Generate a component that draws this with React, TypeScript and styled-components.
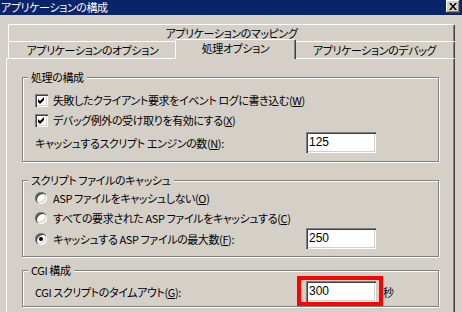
import React from "react";
import styled, { createGlobalStyle } from "styled-components";

const Global = createGlobalStyle`
  html, body { margin: 0; padding: 0; background: #D4D0C8; overflow: hidden; }
  body {
    font-family: "Noto Sans CJK JP", "Noto Sans", sans-serif;
    font-size: 11px;
    color: #000;
  }
  * { box-sizing: border-box; }
`;

const Window = styled.div`
  width: 462px;
  height: 312px;
  overflow: hidden;
  background: #d4d0c8;
  display: flex;
  flex-direction: column;
  font-size: 11px;
  letter-spacing: -0.4px;
  font-feature-settings: "palt";
`;

const TitleBar = styled.div`
  height: 15px;
  flex: none;
  background: #0a246a;
  color: #fff;
  display: flex;
  align-items: center;
  justify-content: space-between;
  padding: 0 2px 0 1px;
`;

const Title = styled.span`
  line-height: 15px;
  white-space: nowrap;
`;

const CloseButton = styled.div`
  width: 14px;
  height: 13px;
  align-self: flex-start;
  background: #d4d0c8;
  box-shadow: inset -1px -1px #404040, inset 1px 1px #fff, inset -2px -2px #808080;
  display: flex;
  align-items: center;
  justify-content: center;
`;

const Body = styled.div`
  flex: 1;
  min-height: 0;
  padding: 9px 0 0 6px;
  display: flex;
  flex-direction: column;
`;

const TabStrip = styled.div`
  margin-left: 2px;
  width: 447px;
  display: flex;
  flex-direction: column;
  position: relative;
  z-index: 1;
`;

const TabRow = styled.div`
  display: flex;
  align-items: flex-end;
  height: 17px;
`;

const Tab = styled.div<{ $w: number; $active?: boolean }>`
  width: ${(p) => p.$w}px;
  height: ${(p) => (p.$active ? 20 : 17)}px;
  margin: ${(p) => (p.$active ? "0 -2px -1px" : "0")};
  position: relative;
  z-index: ${(p) => (p.$active ? 2 : 1)};
  background: #d4d0c8;
  border-top: 1px solid #fff;
  border-left: 1px solid #fff;
  border-right: 1px solid #404040;
  border-top-left-radius: 2px;
  border-top-right-radius: 2px;
  box-shadow: inset -1px 0 #808080;
  display: flex;
  align-items: center;
  justify-content: center;
  padding-bottom: ${(p) => (p.$active ? 3 : 0)}px;
  white-space: nowrap;
  line-height: 14px;
`;

const Panel = styled.div`
  width: 449px;
  flex: 1;
  border-top: 1px solid #fff;
  border-left: 1px solid #fff;
  border-right: 1px solid #404040;
  box-shadow: inset -1px 0 #808080;
  padding: 11px 0 0 15px;
  display: flex;
  flex-direction: column;
`;

const Group = styled.fieldset<{ $mt: number; $pt: number; $pb: number }>`
  margin: ${(p) => p.$mt}px 0 0 0;
  padding: ${(p) => p.$pt}px 0 ${(p) => p.$pb}px 12px;
  width: 417px;
  min-width: 0;
  flex: none;
  border: 1px solid #808080;
  box-shadow: inset 1px 1px #fff, 1px 1px #fff;
  display: flex;
  flex-direction: column;
`;

const Legend = styled.legend`
  padding: 0 3px;
  margin-left: -7px;
  height: 14px;
  line-height: 14px;
  background: #d4d0c8;
  white-space: nowrap;
`;

const OptionRow = styled.div<{ $h?: number }>`
  height: ${(p) => p.$h ?? 20}px;
  display: flex;
  align-items: center;
  gap: 5px;
  white-space: nowrap;
  line-height: 14px;
`;

const CheckBox = styled.span`
  width: 13px;
  height: 13px;
  flex: none;
  background: #fff;
  box-shadow: inset 1px 1px #808080, inset 2px 2px #404040, inset -1px -1px #fff,
    inset -2px -2px #d4d0c8;
  display: flex;
  align-items: center;
  justify-content: center;
`;

const Radio = styled.span<{ $on?: boolean }>`
  width: 12px;
  height: 12px;
  flex: none;
  margin-right: 1px;
  border-radius: 50%;
  background: #fff;
  box-shadow: inset 1px 1px #808080, inset 2px 2px #404040, inset -1px -1px #fff,
    inset -2px -2px #d4d0c8;
  display: flex;
  align-items: center;
  justify-content: center;
  &::after {
    content: "";
    display: ${(p) => (p.$on ? "block" : "none")};
    width: 4px;
    height: 4px;
    border-radius: 50%;
    background: #000;
  }
`;

const FieldRow = styled.div<{ $mt?: number }>`
  margin-top: ${(p) => p.$mt ?? 0}px;
  height: 21px;
  display: grid;
  grid-template-columns: 271px 70px auto;
  align-items: center;
  white-space: nowrap;
  line-height: 14px;
`;

const RadioLabel = styled.span`
  display: flex;
  align-items: center;
  gap: 5px;
`;

const FieldWrap = styled.span`
  position: relative;
  width: 70px;
  height: 21px;
  display: block;
`;

const TextBox = styled.input`
  width: 70px;
  height: 21px;
  margin: 0;
  border: none;
  outline: none;
  background: #fff;
  box-shadow: inset 1px 1px #808080, inset 2px 2px #404040, inset -1px -1px #fff,
    inset -2px -2px #d4d0c8;
  padding: 0 2px 2px 3px;
  font-family: "Liberation Sans", Arial, sans-serif;
  font-size: 12px;
  letter-spacing: 0;
  color: #000;
  display: block;
`;

const Highlight = styled.span`
  position: absolute;
  left: -9px;
  top: -5px;
  width: 86px;
  height: 30px;
  border: 4px solid #ff0000;
  pointer-events: none;
`;

const Unit = styled.span`
  margin-left: 7px;
`;

const Check = () => (
  <svg width="7" height="7" viewBox="0 0 7 7">
    <path d="M0 2 L2 4 L6 0 L6 3 L2 7 L0 5 Z" fill="#000" />
  </svg>
);

const CloseGlyph = () => (
  <svg width="8" height="7" viewBox="0 0 8 7">
    <path d="M0 0 H2 L4 2.5 L6 0 H8 L5 3.5 L8 7 H6 L4 4.5 L2 7 H0 L3 3.5 Z" fill="#000" />
  </svg>
);

export default function App() {
  return (
    <>
      <Global />
      <Window>
        <TitleBar>
          <Title>アプリケーションの構成</Title>
          <CloseButton>
            <CloseGlyph />
          </CloseButton>
        </TitleBar>
        <Body>
          <TabStrip>
            <TabRow>
              <Tab $w={447}>アプリケーションのマッピング</Tab>
            </TabRow>
            <TabRow>
              <Tab $w={169}>アプリケーションのオプション</Tab>
              <Tab $w={121} $active>
                処理オプション
              </Tab>
              <Tab $w={161}>アプリケーションのデバッグ</Tab>
            </TabRow>
          </TabStrip>
          <Panel>
            <Group $mt={0} $pt={6} $pb={8}>
              <Legend>処理の構成</Legend>
              <OptionRow>
                <CheckBox>
                  <Check />
                </CheckBox>
                <span>
                  失敗したクライアント要求をイベント ログに書き込む(<u>W</u>)
                </span>
              </OptionRow>
              <OptionRow>
                <CheckBox>
                  <Check />
                </CheckBox>
                <span>
                  デバッグ例外の受け取りを有効にする(<u>X</u>)
                </span>
              </OptionRow>
              <FieldRow $mt={2}>
                <span>
                  キャッシュするスクリプト エンジンの数(<u>N</u>):
                </span>
                <FieldWrap>
                  <TextBox readOnly defaultValue="125" />
                </FieldWrap>
              </FieldRow>
            </Group>

            <Group $mt={11} $pt={1} $pb={7}>
              <Legend>スクリプト ファイルのキャッシュ</Legend>
              <OptionRow>
                <Radio />
                <span>
                  ASP ファイルをキャッシュしない(<u>O</u>)
                </span>
              </OptionRow>
              <OptionRow>
                <Radio />
                <span>
                  すべての要求された ASP ファイルをキャッシュする(<u>C</u>)
                </span>
              </OptionRow>
              <FieldRow>
                <RadioLabel>
                  <Radio $on />
                  <span>
                    キャッシュする ASP ファイルの最大数(<u>F</u>):
                  </span>
                </RadioLabel>
                <FieldWrap>
                  <TextBox readOnly defaultValue="250" />
                </FieldWrap>
              </FieldRow>
            </Group>

            <Group $mt={6} $pt={4} $pb={4}>
              <Legend>CGI 構成</Legend>
              <FieldRow>
                <span>
                  CGI スクリプトのタイムアウト(<u>G</u>):
                </span>
                <FieldWrap>
                  <TextBox readOnly defaultValue="300" />
                  <Highlight />
                </FieldWrap>
                <Unit>秒</Unit>
              </FieldRow>
            </Group>
          </Panel>
        </Body>
      </Window>
    </>
  );
}
